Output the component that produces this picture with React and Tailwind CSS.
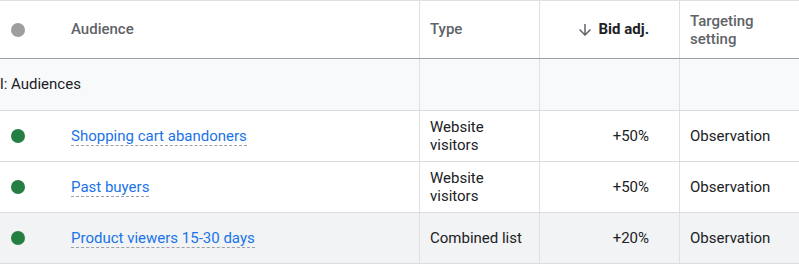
import React from "react";

const rows = [
  { name: "Shopping cart abandoners", type: ["Website", "visitors"], bid: "+50%", setting: "Observation", hover: false },
  { name: "Past buyers", type: ["Website", "visitors"], bid: "+50%", setting: "Observation", hover: false },
  { name: "Product viewers 15-30 days", type: ["Combined list"], bid: "+20%", setting: "Observation", hover: true },
];

function ArrowDown() {
  return (
    <svg width="18" height="18" viewBox="0 0 24 24" fill="#5f6368">
      <path d="M20 12l-1.41-1.41L13 16.17V4h-2v12.17l-5.58-5.59L4 12l8 8 8-8z" />
    </svg>
  );
}

export default function App() {
  const grid = "grid grid-cols-[420px_120px_140px_119px]";
  return (
    <div className="w-[799px] h-[267px] bg-white overflow-hidden text-[15px]" style={{ fontFamily: "Roboto, 'Liberation Sans', sans-serif" }}>
      <div className="border-t border-[#e0e0e0]">
        {/* header */}
        <div className={`${grid} h-[58px] border-b border-[#9aa0a6]`}>
          <div className="flex items-center border-r border-[#e0e0e0]">
            <div className="w-[71px] pl-[11px] flex items-center">
              <span className="w-[14px] h-[14px] rounded-full bg-[#9e9e9e]" />
            </div>
            <span className="text-[#5f6368] font-medium">Audience</span>
          </div>
          <div className="flex items-center pl-[10px] border-r border-[#e0e0e0] text-[#5f6368] font-medium">Type</div>
          <div className="flex items-center justify-end pr-[30px] border-r border-[#e0e0e0]">
            <span className="mr-[5px] flex"><ArrowDown /></span>
            <span className="font-bold text-[#202124]">Bid adj.</span>
          </div>
          <div className="flex items-center pl-[10px] text-[#5f6368] font-medium leading-[18px]">
            <span>Targeting<br />setting</span>
          </div>
        </div>
        {/* totals */}
        <div className={`${grid} h-[52px] bg-[#f8f9fa] border-b border-[#dadce0]`}>
          <div className="flex items-center border-r border-[#e0e0e0] text-[#202124]">l: Audiences</div>
          <div className="border-r border-[#e0e0e0]" />
          <div className="border-r border-[#e0e0e0]" />
          <div />
        </div>
        {rows.map((r, i) => (
          <div key={i} className={`${grid} h-[51px] border-b border-[#dadce0] ${r.hover ? "bg-[#f1f3f4]" : "bg-white"}`}>
            <div className="flex items-center border-r border-[#e0e0e0]">
              <div className="w-[71px] pl-[11px] flex items-center">
                <span className="w-[14px] h-[14px] rounded-full bg-[#257f42]" />
              </div>
              <span className="text-[#1a73e8] border-b border-dashed border-[#9aa0a6] leading-[18px]">{r.name}</span>
            </div>
            <div className="flex items-center pl-[10px] border-r border-[#e0e0e0] text-[#202124] leading-[18px]">
              <span>{r.type.map((t, j) => (<React.Fragment key={j}>{j > 0 && <br />}{t}</React.Fragment>))}</span>
            </div>
            <div className="flex items-center justify-end pr-[30px] border-r border-[#e0e0e0] text-[#202124]">{r.bid}</div>
            <div className="flex items-center pl-[10px] text-[#202124]">{r.setting}</div>
          </div>
        ))}
      </div>
    </div>
  );
}
